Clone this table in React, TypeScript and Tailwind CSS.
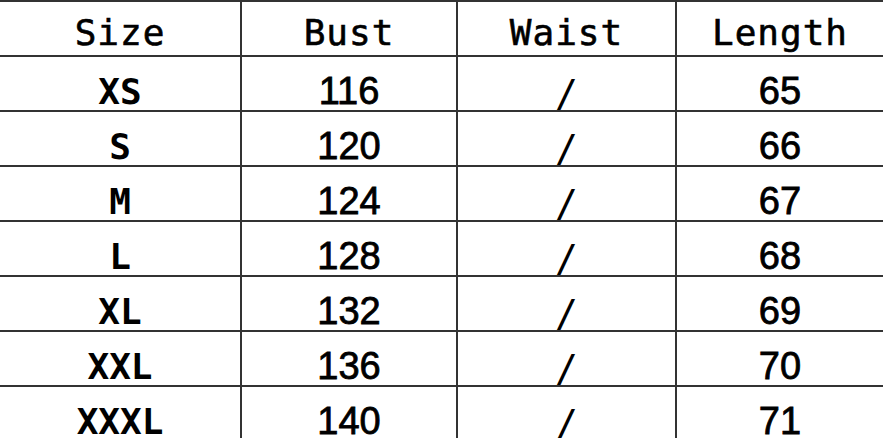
const rows = [
  ['XS', '116', '/', '65'],
  ['S', '120', '/', '66'],
  ['M', '124', '/', '67'],
  ['L', '128', '/', '68'],
  ['XL', '132', '/', '69'],
  ['XXL', '136', '/', '70'],
  ['XXXL', '140', '/', '71'],
]

const cols = 'grid grid-cols-[242px_216px_219px_1fr]'

function cellFont(i: number) {
  if (i === 0) return "font-['DejaVu_Sans_Mono',monospace] text-[36px] font-bold"
  if (i === 2) return "font-['DejaVu_Sans_Mono',monospace] text-[38px] pt-2"
  return "font-['Liberation_Sans',Arial,sans-serif] text-[38px] [-webkit-text-stroke:0.8px_black]"
}

export default function App() {
  return (
    <div className="w-[883px] h-[438px] overflow-hidden bg-white text-black">
      <div className="border-t-2 border-[#333]">
        <div className={`${cols} h-[55px] border-b-2 border-[#333] font-['DejaVu_Sans_Mono',monospace]`}>
          {['Size', 'Bust', 'Waist', 'Length'].map((h, i) => (
            <div
              key={h}
              className={`flex items-center justify-center pt-1 text-[36px] tracking-[1px] [-webkit-text-stroke:0.6px_black] ${i < 3 ? 'border-r-2 border-[#333]' : ''}`}
            >
              {h}
            </div>
          ))}
        </div>
        {rows.map((r) => (
          <div key={r[0]} className={`${cols} h-[55px] border-b-2 border-[#333]`}>
            {r.map((c, i) => (
              <div
                key={i}
                className={`flex items-center justify-center pt-1 ${cellFont(i)} ${i < 3 ? 'border-r-2 border-[#333]' : ''}`}
              >
                {c}
              </div>
            ))}
          </div>
        ))}
      </div>
    </div>
  )
}
